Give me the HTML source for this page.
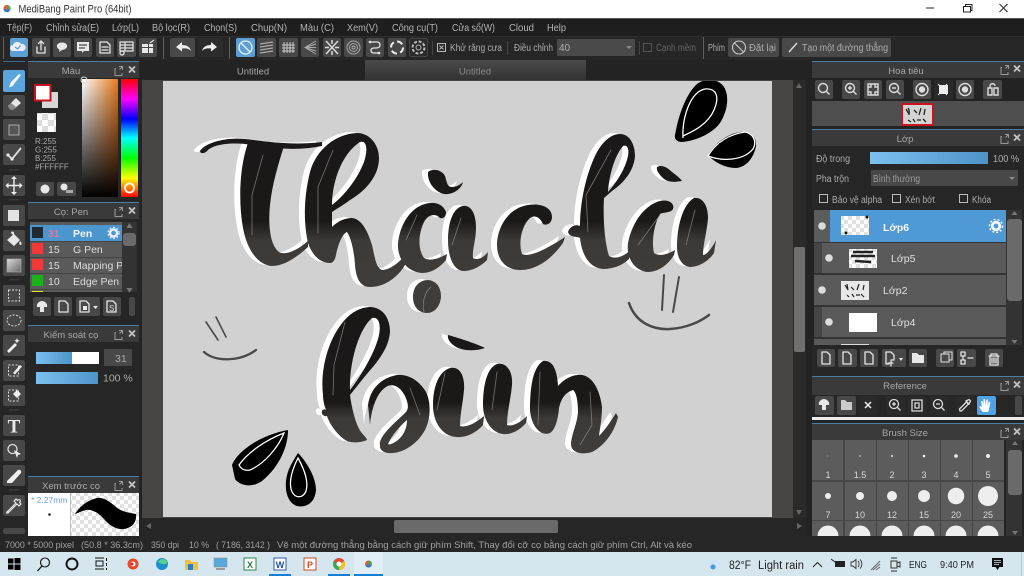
<!DOCTYPE html>
<html><head><meta charset="utf-8"><title>MediBang Paint Pro</title>
<style>
html,body{margin:0;padding:0;background:#222;width:1024px;height:576px;overflow:hidden}
svg{display:block}
text{font-family:"Liberation Sans","Noto Sans CJK SC",sans-serif;font-size:10px;fill:#adadad}
.m{font-size:10.5px;fill:#b4b4b4}
.t{font-size:9.5px;fill:#a8a8a8;text-anchor:middle}
.b{fill:#484848}
.i{fill:none;stroke:#e4e4e4;stroke-width:1.3;stroke-linejoin:round;stroke-linecap:round}
.f{fill:#e8e8e8}
.c{fill:none;stroke:#bbb;stroke-width:1}
.h{fill:none;stroke:#8d8b8a;stroke-width:.8;stroke-linecap:round;opacity:.8}
.ln{fill:#d8d8d8;font-size:9px;text-anchor:middle}
.w{fill:#eee}
</style></head><body>
<svg xmlns="http://www.w3.org/2000/svg" width="1024" height="576" viewBox="0 0 1024 576">
<defs>
<linearGradient id="g1" gradientUnits="userSpaceOnUse" x1="0" y1="80" x2="0" y2="300"><stop offset="0" stop-color="#1a1817"/><stop offset=".64" stop-color="#1b1918"/><stop offset=".73" stop-color="#3c3937"/><stop offset="1" stop-color="#413e3c"/></linearGradient>
<linearGradient id="g2" gradientUnits="userSpaceOnUse" x1="0" y1="300" x2="0" y2="460"><stop offset="0" stop-color="#1a1817"/><stop offset=".64" stop-color="#1b1918"/><stop offset=".74" stop-color="#3c3937"/><stop offset="1" stop-color="#413e3c"/></linearGradient>
<linearGradient id="sq" x1="0" y1="0" x2="1" y2="0"><stop offset="0" stop-color="#fff"/><stop offset="1" stop-color="#e8791f"/></linearGradient>
<linearGradient id="sq2" x1="0" y1="0" x2="0" y2="1"><stop offset="0" stop-color="#000" stop-opacity="0"/><stop offset="1" stop-color="#000"/></linearGradient>
<linearGradient id="hue" x1="0" y1="0" x2="0" y2="1"><stop offset="0" stop-color="#f00"/><stop offset=".17" stop-color="#f0f"/><stop offset=".34" stop-color="#00f"/><stop offset=".5" stop-color="#0ff"/><stop offset=".67" stop-color="#0f0"/><stop offset=".84" stop-color="#ff0"/><stop offset="1" stop-color="#f00"/></linearGradient>
<linearGradient id="bl" x1="0" y1="0" x2="1" y2="0"><stop offset="0" stop-color="#7cc0f0"/><stop offset="1" stop-color="#4d94c8"/></linearGradient>
<linearGradient id="tb" x1="0" y1="0" x2="0" y2="1"><stop offset="0" stop-color="#4a4a4a"/><stop offset="1" stop-color="#333"/></linearGradient>
<linearGradient id="gr" x1="0" y1="0" x2="1" y2="1"><stop offset="0" stop-color="#ddd"/><stop offset="1" stop-color="#666"/></linearGradient>
<pattern id="ck" width="12" height="12" patternUnits="userSpaceOnUse"><rect width="12" height="12" fill="#fff"/><rect width="6" height="6" fill="#ddd"/><rect x="6" y="6" width="6" height="6" fill="#ddd"/></pattern>
<pattern id="ck2" width="8" height="8" patternUnits="userSpaceOnUse"><rect width="8" height="8" fill="#fff"/><rect width="4" height="4" fill="#e0e0e0"/><rect x="4" y="4" width="4" height="4" fill="#e0e0e0"/></pattern>
<filter id="ink" filterUnits="userSpaceOnUse" x="150" y="70" width="640" height="460" color-interpolation-filters="sRGB">
<feOffset in="SourceGraphic" dx="-6" dy="-1" result="o"/>
<feFlood flood-color="#fff" result="w"/>
<feComposite in="w" in2="o" operator="in" result="wh"/>
<feMerge><feMergeNode in="wh"/><feMergeNode in="SourceGraphic"/></feMerge>
</filter>
<clipPath id="cv"><rect x="163" y="81" width="609" height="436"/></clipPath>
<clipPath id="gc"><rect x="812" y="440" width="192" height="96"/></clipPath>
<clipPath id="bc"><rect x="30" y="225" width="92" height="67"/></clipPath>
<clipPath id="lc"><rect x="814" y="210" width="192" height="135"/></clipPath>
</defs>

<!-- window -->
<rect width="1024" height="576" fill="#232323"/>
<rect width="1024" height="18" fill="#fff"/>
<rect y="18" width="1024" height="1" fill="#555"/>
<circle cx="7" cy="8.500" r="3.600" fill="#e05a3a"/><path d="M7 5a3.600 3.600 0 0 1 3 5.500L7 8.500z" fill="#3fb05a"/><path d="M3.600 10a3.600 3.600 0 0 0 6.400.5L7 8.500z" fill="#3a78c8"/>
<text x="18.500" y="12.500" textLength="113" lengthAdjust="spacingAndGlyphs" style="font-size:11px;fill:#333">MediBang Paint Pro (64bit)</text>
<path d="M926 8h8" stroke="#222" stroke-width="1" fill="none"/>
<path d="M963.500 6.500h7v5.500h-7zM965.500 6.500v-2h6.500v6h-1.500" stroke="#222" stroke-width="1" fill="none"/>
<path d="M999.500 4l8 8M1007.500 4l-8 8" stroke="#222" stroke-width="1" fill="none"/>

<!-- menu -->
<rect y="19" width="1024" height="17" fill="#1e1e1e"/>
<g>
<text class="m" x="7" y="31" textLength="25" lengthAdjust="spacingAndGlyphs">Tệp(F)</text>
<text class="m" x="46" y="31" textLength="53" lengthAdjust="spacingAndGlyphs">Chỉnh sửa(E)</text>
<text class="m" x="112" y="31" textLength="27" lengthAdjust="spacingAndGlyphs">Lớp(L)</text>
<text class="m" x="152" y="31" textLength="38" lengthAdjust="spacingAndGlyphs">Bộ lọc(R)</text>
<text class="m" x="204" y="31" textLength="33" lengthAdjust="spacingAndGlyphs">Chọn(S)</text>
<text class="m" x="251" y="31" textLength="36" lengthAdjust="spacingAndGlyphs">Chụp(N)</text>
<text class="m" x="300" y="31" textLength="34" lengthAdjust="spacingAndGlyphs">Màu (C)</text>
<text class="m" x="347" y="31" textLength="31" lengthAdjust="spacingAndGlyphs">Xem(V)</text>
<text class="m" x="392" y="31" textLength="46" lengthAdjust="spacingAndGlyphs">Công cụ(T)</text>
<text class="m" x="452" y="31" textLength="43" lengthAdjust="spacingAndGlyphs">Cửa sổ(W)</text>
<text class="m" x="509" y="31" textLength="25" lengthAdjust="spacingAndGlyphs">Cloud</text>
<text class="m" x="547" y="31" textLength="19" lengthAdjust="spacingAndGlyphs">Help</text>
</g>

<!-- toolbar -->
<rect y="36" width="1024" height="24" fill="#262626"/>
<rect y="36" width="1024" height="1" fill="#2e2e2e"/>
<g fill="#3a6a8c"><rect x="3" y="37" width="1" height="22"/><rect x="163" y="37" width="1" height="22"/><rect x="229" y="37" width="1" height="22"/><rect x="703" y="37" width="1" height="22"/></g>
<rect x="10" y="38" width="18" height="19" rx="2" fill="#5c9fd4"/>
<g class="b"><rect x="32" y="38" width="18" height="19" rx="2"/><rect x="53" y="38" width="18" height="19" rx="2"/><rect x="74" y="38" width="18" height="19" rx="2"/><rect x="96" y="38" width="18" height="19" rx="2"/><rect x="117" y="38" width="19" height="19" rx="2"/><rect x="139" y="38" width="18" height="19" rx="2"/><rect x="170" y="38" width="25" height="19" rx="2"/><rect x="198" y="38" width="25" height="19" rx="2" fill="#2c2c2c"/></g>
<rect x="236" y="38" width="19" height="19" rx="2" fill="#5c9fd4"/>
<g class="b"><rect x="257" y="38" width="19" height="19" rx="2"/><rect x="279" y="38" width="19" height="19" rx="2"/><rect x="301" y="38" width="18" height="19" rx="2"/><rect x="323" y="38" width="18" height="19" rx="2"/><rect x="344" y="38" width="19" height="19" rx="2"/><rect x="366" y="38" width="18" height="19" rx="2"/><rect x="388" y="38" width="18" height="19" rx="2"/></g>
<rect x="409.500" y="38.500" width="18" height="18" rx="2" fill="#2a2a2a" stroke="#444"/>
<!-- toolbar icons -->
<path d="M13 51a3 3 0 0 1 0-6 4.500 4.500 0 0 1 8-1 3.500 3.500 0 0 1 2 7z" fill="#eef"/><path d="M15 47l2.500 2 3-3.500" stroke="#5c9fd4" stroke-width="1.300" fill="none"/>
<path class="i" d="M37 47v6h8v-6M41 50v-9M38.500 43.500l2.500-2.500 2.500 2.500"/>
<path class="f" d="M57 43a5.500 4.200 0 0 1 10 0 5.500 4.200 0 0 1-5 5l-3 2 .5-2.400a4.500 4 0 0 1-2.500-4.600z" transform="translate(0 2)"/>
<path class="f" d="M77 42h12v9h-5l-2 2v-2h-5z"/><path d="M79 45h8M79 48h6" stroke="#484848" stroke-width="1.200"/>
<path class="i" d="M100 42h7l3 3v8h-10zM102 47h6M102 50h6"/>
<path class="i" d="M120 42h13v9h-13zM120 45h13M120 48h13M125 42v9"/><circle cx="122" cy="53" r="2" class="i"/>
<path class="f" d="M142 44h6v3h-6zM149 44h4v3h-4zM142 48h6v5h-6zM149 48h4v5h-4z"/><path d="M150 43l4-3" stroke="#ddd" stroke-width="1.300"/>
<path d="M176 47l6-5v3c5 0 8 2 9 6-2-2.500-5-3-9-2.500v3z" fill="#eee"/>
<path d="M217 47l-6-5v3c-5 0-8 2-9 6 2-2.500 5-3 9-2.500v3z" fill="#eee"/>
<circle cx="245.500" cy="47.500" r="6.500" fill="none" stroke="#e8f2fa" stroke-width="1.300"/><path d="M241 43l9 9" stroke="#e8f2fa" stroke-width="1.300"/>
<path d="M260 44l13-2M260 47l13-2M260 50l13-2M260 53l13-2" stroke="#aaa" stroke-width="1.200" fill="none"/>
<path d="M284 42v11M287 42v11M290 42v11M293 42v11M282 45h13M282 48h13M282 51h13" stroke="#ccc" stroke-width="1" fill="none"/>
<path d="M316 41l-11 6.500 11 6.500M316 47.500h-11M316 44l-11 3.500M316 51l-11-3.500" stroke="#aaa" stroke-width="1" fill="none"/>
<path d="M326 41l12 13M338 41l-12 13M332 40v4M332 51v4M325 47.500h4M335 47.500h4" stroke="#ddd" stroke-width="1.500" fill="none"/>
<g fill="none" stroke="#aaa"><circle cx="353.500" cy="47.500" r="6.500"/><circle cx="353.500" cy="47.500" r="4"/><circle cx="353.500" cy="47.500" r="1.500"/></g>
<path class="i" d="M370 42h7c2 0 3 1 3 3s-1 3-4 3h-2c-2 0-3 1-3 2.500s1 2.500 3 2.500h5"/><circle cx="370" cy="42" r="1.300" class="f"/><circle cx="379" cy="53" r="1.300" class="f"/>
<circle cx="397" cy="47.500" r="6" fill="none" stroke="#eee" stroke-width="2" stroke-dasharray="6 3.400"/>
<circle cx="418.500" cy="47.500" r="6" fill="none" stroke="#bbb" stroke-width="2" stroke-dasharray="3 1.700"/><circle cx="418.500" cy="47.500" r="2.500" fill="none" stroke="#bbb"/>
<rect x="432" y="41" width="1" height="14" fill="#444"/>
<rect x="437.500" y="43.500" width="8" height="8" fill="none" stroke="#bbb"/><path d="M439.500 45.500l4 4m0-4l-4 4" stroke="#bbb"/>
<text x="450" y="51" textLength="52" lengthAdjust="spacingAndGlyphs">Khử răng cưa</text>
<rect x="507" y="41" width="1" height="14" fill="#444"/>
<text x="514" y="51" textLength="39" lengthAdjust="spacingAndGlyphs">Điều chỉnh</text>
<rect x="557" y="39" width="78" height="17" rx="1" fill="#4a4a4a"/><text x="559" y="51" fill="#aaa">40</text><path d="M626 46h6l-3 3z" fill="#888"/>
<rect x="639" y="41" width="1" height="14" fill="#444"/>
<rect x="643.500" y="43.500" width="8" height="8" fill="none" stroke="#555"/>
<text x="656" y="51" textLength="40" lengthAdjust="spacingAndGlyphs" style="fill:#666">Cạnh mềm</text>
<text x="708" y="51" textLength="17" lengthAdjust="spacingAndGlyphs">Phím</text>
<rect x="728" y="38" width="51" height="19" rx="2" class="b"/><circle cx="739" cy="47.500" r="6.500" fill="none" stroke="#ccc" stroke-width="1.100"/><path d="M734.500 43l9 9" stroke="#ccc" stroke-width="1.100"/>
<text x="749" y="51" textLength="27" lengthAdjust="spacingAndGlyphs">Đặt lại</text>
<rect x="782" y="38" width="109" height="19" rx="2" class="b"/><path d="M789 52l8-9" stroke="#ddd" stroke-width="1.400"/>
<text x="802" y="51" textLength="86" lengthAdjust="spacingAndGlyphs">Tạo một đường thẳng</text>

<!-- tabs -->
<rect x="142" y="60" width="223" height="20" fill="#232323"/>
<rect x="365" y="60" width="221" height="20" fill="url(#tb)"/>
<rect x="586" y="60" width="220" height="20" fill="#232323"/>
<text class="t" x="253" y="74.500">Untitled</text><text class="t" x="475" y="74.500" style="fill:#8a8a8a">Untitled</text>

<!-- workspace -->
<rect x="142" y="80" width="651" height="438" fill="#484644"/>
<rect x="163" y="81" width="609" height="436" fill="#d1d1d1"/>

<!-- artwork -->
<g clip-path="url(#cv)">
<title>Thặc là bùn</title>
<g filter="url(#ink)">
<g fill="url(#g1)" stroke="none">
<path d="M200,151C205,143 225,137 245,139C265,141 290,146 322,142L322,146C295,152 265,147 245,144C225,142 212,146 208,150C205,154 200,154 200,151Z"/>
<path d="M248,143C240,165 238,200 243,228C247,250 258,265 272,266C285,266 298,256 308,247L308,241C298,250 285,256 279,252C270,245 268,225 270,205C272,185 278,165 284,146C272,148 258,145 248,143Z"/>
<path fill-rule="evenodd" d="M330,263C320,263 312,255 308,243C304,225 303,200 310,172C316,150 335,134 357,133C370,133 379,145 379,158C379,175 367,190 350,200C345,204 338,208 332,212L332,227C338,221 345,218 352,218C362,219 368,232 372,245C375,258 376,268 382,270C390,270 400,262 407,253L405,265C398,277 385,287 370,287C360,287 356,278 355,265C354,250 351,238 347,232C342,234 338,245 336,255C335,260 333,263 330,263ZM332,205C332,185 340,155 360,142C367,140 368,150 364,162C358,178 345,195 332,205Z"/>
<path d="M428,172C433,168 442,170 445,176C447,182 447,187 452,187C456,187 460,185 463,182C461,190 452,195 444,194C435,192 427,182 428,172Z"/>
<path d="M398,243C400,225 410,208 425,204C435,201 443,204 446,212C446,216 444,219 440,218C436,213 428,214 424,222C419,232 417,248 424,258C430,262 440,258 447,254L446,260C440,267 432,273 422,273C408,272 397,260 398,243Z"/>
<path d="M448,240C448,225 452,208 463,206C472,205 476,215 476,228C476,240 472,250 473,258C478,261 484,257 488,252L487,260C480,267 472,271 463,271C454,270 448,258 448,240Z"/>
<path d="M497,245C497,228 508,208 528,205C542,203 552,208 552,217C552,223 547,226 543,224C540,217 534,214 529,219C522,226 518,242 522,254C530,258 548,248 565,237L563,243C552,258 538,270 520,270C506,270 497,260 497,245Z"/>
<path fill-rule="evenodd" d="M568,232C570,226 576,224 580,226C580,205 585,175 597,152C604,140 612,134 620,134C630,134 635,145 635,156C634,170 625,182 612,191L604,198C603,215 604,240 609,256C616,260 624,256 631,250L629,259C622,266 612,269 603,269C590,268 582,256 580,238C576,236 570,238 568,232ZM608,192C609,175 615,155 623,146C628,144 630,150 627,160C623,173 615,184 608,192Z"/>
<path d="M657,167C662,164 668,168 672,172C676,175 680,178 682,181C676,182 668,183 663,178C660,175 656,171 657,167Z"/>
<path d="M628,243C632,222 645,205 660,201C668,199 675,203 673,209C671,213 664,212 660,214C655,222 651,240 654,253C660,257 668,254 675,250L674,255C668,265 658,272 648,272C636,271 626,260 628,243Z"/>
<path d="M677,247C677,228 682,205 694,198C703,197 708,206 708,218C707,232 703,244 703,255C707,255 712,248 716,240L714,253C708,262 698,267 690,267C682,266 677,258 677,247Z"/>
<path d="M413,297C413,286 420,280 428,280C437,281 441,288 441,297C440,307 434,313 427,313C419,313 413,307 413,297Z" fill="#3f3c3a"/>
</g>
<g fill="url(#g2)">
<path fill-rule="evenodd" d="M323,395C320,370 328,340 343,322C352,311 362,307 371,307C383,308 390,318 390,332C389,345 382,356 372,368C365,376 358,385 350,395C352,410 356,425 361,432C364,436 367,438 367,440C360,443 352,443 347,441C338,436 330,425 327,416C324,417 321,414 322,411C323,409 325,409 326,410C324,405 323,400 323,395ZM350,390C349,365 358,330 372,318C379,316 381,325 379,335C376,350 362,375 350,390Z"/>
<path fill-rule="evenodd" d="M368,405C370,390 380,378 397,375C410,374 420,382 426,392C431,402 431,418 425,430C418,443 405,452 393,453C385,454 379,450 380,445C378,438 392,425 404,414C409,410 409,405 405,396C400,386 392,383 386,387C378,392 372,405 370,425ZM388,444C392,435 400,426 407,420C407,430 402,438 395,442C392,444 389,445 388,444Z"/>
<path d="M433,405C433,388 438,372 450,368C460,366 465,376 464,390C463,402 460,415 460,426C466,428 476,423 484,416L483,425C476,433 466,438 456,437C442,436 433,422 433,405Z"/>
<path d="M448,335C455,337 475,343 485,348C476,351 466,351 458,348C452,345 447,340 448,335Z"/>
<path d="M483,405C483,385 487,368 497,364C507,362 513,372 512,385C511,398 507,412 507,425C513,427 521,422 527,416L526,423C520,430 511,435 503,434C492,433 483,420 483,405Z"/>
<path d="M530,410C530,390 532,368 543,361C552,360 557,368 558,386C565,378 574,374 582,375C594,377 600,392 602,407C602,418 600,428 599,436C605,430 611,421 616,413L618,417C615,430 606,445 592,452C582,455 572,453 571,445C571,435 577,425 578,412C578,400 576,392 573,390C566,392 561,398 559,408C558,420 555,430 550,433C540,437 531,425 530,410Z"/>
</g>
</g>
<!-- seeds -->
<path d="M675,135C678,118 685,95 697,84C705,78 718,78 724,87C730,97 727,112 720,123C712,134 695,141 682,142C677,142 674,139 675,135Z" fill="#000"/>
<path d="M683,138C682,118 690,92 705,89C716,88 720,96 714,110C708,124 694,131 683,136" fill="none" stroke="#fff" stroke-width="1.300"/>
<path d="M708,155C714,144 727,134 740,132C750,131 757,137 756,146C754,157 747,167 736,168C725,168 714,162 708,155Z" fill="#000"/>
<path d="M708,156C716,142 730,134 745,132C754,134 757,142 753,149C744,160 724,162 708,156Z" fill="none" stroke="#fff" stroke-width="1.300"/>
<path d="M232,465C236,454 256,436 288,430C288,446 280,466 262,481C252,488 240,486 235,479Z" fill="#000"/>
<path d="M239,465C248,452 266,440 284,433C278,448 264,464 250,470C245,471 241,469 239,465Z" fill="none" stroke="#fff" stroke-width="1.300"/>
<path d="M298,453C305,460 316,476 316,490C315,503 306,508 297,506C288,503 285,492 286,481C287,470 293,461 298,453Z" fill="#000"/>
<path d="M298,458C293,468 289,480 291,489C294,499 303,499 306,491C309,481 303,467 298,458Z" fill="none" stroke="#fff" stroke-width="1.300"/>
<!-- highlights -->
<path class="h" d="M263,155L252,195L252,235"/><path class="h" d="M333,150L318,187L318,233"/><path class="h" d="M417,215L406,240"/><path class="h" d="M461,218L452,245"/><path class="h" d="M611,150L586,195L588,232"/><path class="h" d="M660,215L638,245"/><path class="h" d="M695,210L686,245"/><path class="h" d="M431,287C424,292 422,305 424,312"/><path class="h" d="M345,322L334,365L333,395"/><path class="h" d="M410,388L420,415"/><path class="h" d="M445,373L437,410"/><path class="h" d="M497,372L492,410"/><path class="h" d="M540,372L538,425"/><path class="h" d="M590,392L592,425L580,445"/>
<!-- marks -->
<g fill="none" stroke="#4b4948" stroke-linecap="round">
<path d="M664,275L662,310M679,277L673,312" stroke-width="2"/>
<path d="M629,303C636,324 655,330 670,329C686,328 700,322 709,315" stroke-width="2.500"/>
<path d="M206,322L218,340M216,317L226,337" stroke-width="1.600"/>
<path d="M204,352C215,362 240,362 256,350" stroke-width="2.300"/>
</g>
</g>

<!-- scrollbars -->
<rect x="793" y="80" width="13" height="438" fill="#2a2a2a"/><rect x="794" y="247" width="11" height="105" rx="2" fill="#6f6f6f"/>
<path d="M799 83l3 5h-6zM799 515l3-5h-6z" fill="#666"/>
<rect x="142" y="518" width="664" height="18" fill="#262626"/><rect x="394" y="520" width="164" height="13" rx="2" fill="#6a6a6a"/>
<path d="M146 526l5-3v6z M802 526l-5-3v6z" fill="#666"/>

<!-- left tools -->
<rect y="60" width="28" height="476" fill="#262626"/>
<rect x="3" y="61" width="22" height="1" fill="#3a6a8c"/>
<rect x="3" y="70" width="22" height="22" rx="2" fill="#5aa5dc"/>
<path d="M9 87c3 0 4-1 5-3l7-9-2-1-8 8c-1 2-1 3-2 5z" fill="#f2f6fa"/>
<g class="b"><rect x="3" y="95" width="22" height="21" rx="2"/><rect x="3" y="119" width="22" height="21" rx="2"/><rect x="3" y="144" width="22" height="21" rx="2"/><rect x="3" y="175" width="22" height="21" rx="2"/><rect x="3" y="205" width="22" height="21" rx="2"/><rect x="3" y="230" width="22" height="21" rx="2"/><rect x="3" y="255" width="22" height="21" rx="2"/><rect x="3" y="285" width="22" height="21" rx="2"/><rect x="3" y="310" width="22" height="21" rx="2"/><rect x="3" y="335" width="22" height="21" rx="2"/><rect x="3" y="360" width="22" height="21" rx="2"/><rect x="3" y="385" width="22" height="21" rx="2"/><rect x="3" y="415" width="22" height="21" rx="2"/><rect x="3" y="440" width="22" height="21" rx="2"/><rect x="3" y="465" width="22" height="21" rx="2"/><rect x="3" y="495" width="22" height="21" rx="2"/><rect x="3" y="528" width="22" height="6" rx="2"/></g>
<g fill="#3a3a3a"><rect x="9" y="169" width="10" height="1.500"/><rect x="9" y="199" width="10" height="1.500"/><rect x="9" y="279" width="10" height="1.500"/><rect x="9" y="409" width="10" height="1.500"/><rect x="9" y="489" width="10" height="1.500"/></g>
<path d="M8 106l8-8 5 5-8 7-3-1z" fill="#e8e8e8"/><path d="M8 106l3 4 2 0 3-3-5-4z" fill="#888"/>
<rect x="9" y="125" width="10" height="10" fill="#555" stroke="#aaa"/>
<path d="M8 155l4 4 9-11" fill="none" stroke="#ddd" stroke-width="1.800"/><circle cx="8" cy="155" r="1.600" class="f"/><circle cx="12" cy="159" r="1.600" class="f"/>
<path d="M14 177v15M6.500 185.500h15" stroke="#eee" stroke-width="1.400"/><path d="M14 176l3 3h-6zM14 195l3-3h-6zM5.500 185.500l3-3v6zM22.500 185.500l-3-3v6z" fill="#eee"/>
<rect x="8" y="210" width="11" height="11" fill="#e4e4e4"/>
<path d="M7 240l7-6 6 6-6 6zM11 233c0-2 3-2 3 0v3" fill="#e8e8e8"/><path d="M20 241c2 2 2 4 .5 4s-1.500-2-.5-4z" fill="#e8e8e8"/>
<rect x="7" y="259" width="14" height="13" fill="url(#gr)" stroke="#aaa" stroke-width=".7"/>
<rect x="8.500" y="290" width="11" height="11" fill="none" stroke="#ddd" stroke-dasharray="2 1.500"/>
<ellipse cx="14" cy="320.500" rx="7" ry="5.500" fill="none" stroke="#ddd" stroke-dasharray="2 1.500"/>
<path d="M7 351l8-8 2 2-8 8zM17 338l.8 2 2 .8-2 .8-.8 2-.8-2-2-.8 2-.8z" fill="#eee"/>
<rect x="8.500" y="365" width="10" height="11" fill="none" stroke="#ddd" stroke-dasharray="2 1.500"/><path d="M13 373l7-8 2 1.500-7 8z" fill="#eee"/>
<rect x="8.500" y="390" width="10" height="11" fill="none" stroke="#ddd" stroke-dasharray="2 1.500"/><path d="M13 394l4-4 4 4-4 4z" fill="#eee"/>
<text x="14" y="432.500" text-anchor="middle" style="font-family:'Liberation Serif',serif;font-size:19px;font-weight:bold;fill:#e8e8e8">T</text>
<circle cx="12.500" cy="449" r="4.500" fill="none" stroke="#ddd" stroke-width="1.300"/><path d="M14 450l7 4-3 1-1 3z" fill="#eee"/>
<path d="M7 481l11-11c2-1 4 1 3 3l-9 10-5 0z" fill="#eee"/>
<path d="M8 512l-1 1 1 0 9-9 2 2 2-2-1.500-1.500c2-2 0-4-2-2l-1.500-1.500-2 2 2 2-9 9z" fill="none" stroke="#eee" stroke-width="1.100"/>

<!-- panel helper bg -->
<rect x="28" y="60" width="112" height="476" fill="#262626"/>
<!-- Color panel -->
<rect x="28" y="61" width="111" height="1" fill="#4a7ea2"/>
<rect x="28" y="62" width="111" height="16" fill="#3a3a3a"/>
<text class="t" x="71" y="74">Màu</text>
<path d="M116 68.500h-1v7h7v-2.500M119 66.500h3.500v3.500M122.500 66.500l-3 3" fill="none" stroke="#999"/><path d="M129 66.500l6 6m0-6l-6 6" stroke="#c4c4c4" stroke-width="1.800"/>
<rect x="42" y="92" width="16" height="16" fill="#d6d6d6"/>
<rect x="35" y="85" width="15.500" height="15.500" fill="#fff" stroke="#c8141e" stroke-width="2"/>
<rect x="37" y="113" width="19" height="19" fill="url(#ck)"/>
<text x="35" y="144" style="font-size:8px;fill:#aaa">R:255</text><text x="35" y="152.500" style="font-size:8px;fill:#aaa">G:255</text><text x="35" y="161" style="font-size:8px;fill:#aaa">B:255</text><text x="35" y="169.500" style="font-size:8px;fill:#aaa">#FFFFFF</text>
<rect x="36" y="182" width="18" height="14" rx="2" class="b"/><rect x="57" y="182" width="19" height="14" rx="2" class="b"/>
<circle cx="45" cy="189" r="4.500" class="f"/><circle cx="64" cy="187" r="3.500" class="f"/><rect x="66" y="190" width="7" height="3" fill="#aaa"/>
<rect x="82" y="79" width="36" height="118" fill="url(#sq)"/><rect x="82" y="79" width="36" height="118" fill="url(#sq2)"/>
<circle cx="84" cy="80" r="3" fill="none" stroke="#ddd"/>
<rect x="121" y="79" width="17" height="118" fill="url(#hue)"/>
<circle cx="129.500" cy="188" r="4.500" fill="none" stroke="#fff" stroke-width="1.800"/>

<!-- Brush panel -->
<rect x="28" y="202" width="111" height="1" fill="#4a7ea2"/>
<rect x="28" y="203" width="111" height="16" fill="#3a3a3a"/>
<text class="t" x="71" y="215">Cọ: Pen</text>
<path d="M116 209.500h-1v7h7v-2.500M119 207.500h3.500v3.500M122.500 207.500l-3 3" fill="none" stroke="#999"/><path d="M129 207.500l6 6m0-6l-6 6" stroke="#c4c4c4" stroke-width="1.800"/>
<rect x="30" y="222" width="92" height="70" fill="#5a5a5a"/>
<g clip-path="url(#bc)">
<rect x="30" y="225" width="92" height="16" fill="#4c96d0"/>
<rect x="32" y="227" width="11" height="11" fill="#1f2a33"/><text x="48" y="237" style="font-size:10.500px;fill:#d8799a;font-weight:bold">31</text><text x="73" y="237" style="font-size:10.500px;fill:#f2f6fa;font-weight:bold">Pen</text>
<circle cx="113.500" cy="233" r="3.500" fill="none" stroke="#eef" stroke-width="2.400"/><circle cx="113.500" cy="233" r="5.500" fill="none" stroke="#eef" stroke-width="1.200" stroke-dasharray="1.800 1.800"/>
<rect x="30" y="241" width="92" height="1" fill="#444"/><rect x="30" y="257" width="92" height="1" fill="#444"/><rect x="30" y="273" width="92" height="1" fill="#444"/><rect x="30" y="289" width="92" height="1" fill="#444"/>
<rect x="32" y="243" width="11" height="11" fill="#f03a3a"/><text x="48" y="253" style="font-size:10.500px;fill:#ddd">15</text><text x="73" y="253" style="font-size:10.500px;fill:#ddd">G Pen</text>
<rect x="32" y="259" width="11" height="11" fill="#f03a3a"/><text x="48" y="269" style="font-size:10.500px;fill:#ddd">15</text><text x="73" y="269" style="font-size:10.500px;fill:#ddd">Mapping Pen</text>
<rect x="32" y="275" width="11" height="11" fill="#1cb01c"/><text x="48" y="285" style="font-size:10.500px;fill:#ddd">10</text><text x="73" y="285" style="font-size:10.500px;fill:#ddd">Edge Pen</text>
<rect x="32" y="291" width="11" height="4" fill="#e6e61c"/>
</g>
<rect x="122" y="222" width="15" height="70" fill="#333"/><rect x="123" y="233" width="13" height="13" rx="3" fill="#6a6a6a"/>
<path d="M129.500 223l3 5h-6zM129.500 293l3-5h-6z" fill="#777"/>
<g class="b"><rect x="33" y="297" width="18" height="19" rx="2"/><rect x="54" y="297" width="18" height="19" rx="2"/><rect x="76" y="297" width="24" height="19" rx="2"/><rect x="103" y="297" width="18" height="19" rx="2"/><rect x="129" y="297" width="6" height="19" rx="2"/></g>
<path d="M37 307c-1-4 3-6 5-6s6 2 5 6h-3v5h-4v-5z" class="f"/>
<path class="i" d="M59 301h6l3 3v8h-9z"/><path class="i" d="M80 301h6l3 3v8h-9z"/><rect x="83" y="306" width="4" height="4" class="f"/><path d="M93 306h5l-2.500 3z" class="f"/>
<path class="i" d="M107 301h6l3 3v8h-9z"/><text x="109" y="311" style="font-size:8px;fill:#ddd">S</text>

<!-- Brush control -->
<rect x="28" y="325" width="111" height="1" fill="#4a7ea2"/>
<rect x="28" y="326" width="111" height="16" fill="#3a3a3a"/>
<text class="t" x="71" y="338">Kiểm soát cọ</text>
<path d="M116 332.500h-1v7h7v-2.500M119 330.500h3.500v3.500M122.500 330.500l-3 3" fill="none" stroke="#999"/><path d="M129 330.500l6 6m0-6l-6 6" stroke="#c4c4c4" stroke-width="1.800"/>
<rect x="36" y="352" width="63" height="12" fill="#fff"/><rect x="36" y="352" width="36" height="12" fill="url(#bl)"/>
<rect x="104" y="349" width="28" height="17" rx="1" class="b"/><text x="115" y="362" style="font-size:10.500px;fill:#aaa">31</text>
<rect x="36" y="372" width="62" height="12" fill="url(#bl)"/>
<text x="103" y="381.500" style="font-size:10.500px;fill:#aaa">100 %</text>

<!-- Preview -->
<rect x="28" y="476" width="111" height="1" fill="#4a7ea2"/>
<rect x="28" y="477" width="111" height="16" fill="#3a3a3a"/>
<text class="t" x="71" y="489">Xem trước cọ</text>
<path d="M116 483.500h-1v7h7v-2.500M119 481.500h3.500v3.500M122.500 481.500l-3 3" fill="none" stroke="#999"/><path d="M129 481.500l6 6m0-6l-6 6" stroke="#c4c4c4" stroke-width="1.800"/>
<rect x="28" y="493" width="43" height="43" fill="#fff"/><rect x="71" y="493" width="68" height="43" fill="url(#ck2)"/><rect x="70" y="493" width="1" height="43" fill="#bbb"/>
<text x="31" y="503" style="font-size:8.500px;fill:#6aa5d8">* 2.27mm</text><circle cx="49.500" cy="514.500" r="1.300" fill="#222"/>
<path d="M75,514C80,506 88,500 97,498C104,497 110,502 116,507C122,512 130,513 136,514C137,522 132,528 124,529C116,530 109,525 104,519C99,513 92,509 86,510C82,511 78,513 75,514Z" fill="#000"/>

<!-- Status -->
<rect y="536" width="1024" height="16" fill="#262626"/>
<g>
<text x="5" y="548" textLength="69" lengthAdjust="spacingAndGlyphs" style="font-size:9.500px;fill:#a0a0a0">7000 * 5000 pixel</text>
<text x="81" y="548" textLength="62" lengthAdjust="spacingAndGlyphs" style="font-size:9.500px;fill:#a0a0a0">(50.8 * 36.3cm)</text>
<text x="151" y="548" textLength="28" lengthAdjust="spacingAndGlyphs" style="font-size:9.500px;fill:#a0a0a0">350 dpi</text>
<text x="189" y="548" textLength="20" lengthAdjust="spacingAndGlyphs" style="font-size:9.500px;fill:#a0a0a0">10 %</text>
<text x="216" y="548" textLength="54" lengthAdjust="spacingAndGlyphs" style="font-size:9.500px;fill:#a0a0a0">( 7186, 3142 )</text>
<text x="277" y="548" textLength="415" lengthAdjust="spacingAndGlyphs" style="font-size:9.500px;fill:#a0a0a0">Vẽ một đường thẳng bằng cách giữ phím Shift, Thay đổi cỡ cọ bằng cách giữ phím Ctrl, Alt và kéo</text>
</g>

<!-- Right panels -->
<rect x="806" y="60" width="218" height="476" fill="#232323"/>
<rect x="812" y="61" width="212" height="1" fill="#4a7ea2"/>
<rect x="812" y="62" width="212" height="16" fill="#3a3a3a"/>
<text class="t" x="906" y="74">Hoa tiêu</text>
<path d="M1002 67.500h-1v7h7v-2.500M1005 65.500h3.500v3.500M1008.500 65.500l-3 3" fill="none" stroke="#999"/><path d="M1014 65.500l6 6m0-6l-6 6" stroke="#c4c4c4" stroke-width="1.800"/>
<g class="b"><rect x="815" y="80" width="18" height="19" rx="2"/><rect x="842" y="80" width="18" height="19" rx="2"/><rect x="864" y="80" width="18" height="19" rx="2"/><rect x="886" y="80" width="18" height="19" rx="2"/><rect x="913" y="80" width="18" height="19" rx="2"/><rect x="934" y="80" width="19" height="19" rx="2" fill="#2a2a2a"/><rect x="956" y="80" width="18" height="19" rx="2"/><rect x="983" y="80" width="19" height="19" rx="2"/></g>
<g fill="none" stroke="#ddd" stroke-width="1.400"><circle cx="823" cy="88" r="4.500"/><path d="M826.500 91.500l3 3"/><circle cx="850" cy="88" r="4.500"/><path d="M853.500 91.500l3 3M848 88h4M850 86v4"/><path d="M868 84h10v11h-10zM871 84v3h-3M875 84v3h3M871 95v-3h-3M875 95v-3h3"/><circle cx="894" cy="88" r="4.500"/><path d="M897.500 91.500l3 3M892 88h4"/><circle cx="922" cy="89.500" r="6"/><circle cx="922" cy="89.500" r="2.500" fill="#ddd"/><circle cx="965" cy="89.500" r="6"/><circle cx="965" cy="89.500" r="2.500" fill="#ddd"/><path d="M988 88h4v7h-4zM994 88h4v7h-4zM990 88v-2c0-3 5-3 5 0"/></g>
<rect x="939" y="85" width="9" height="9" fill="#eee"/><path d="M938 84l2 2m7-2l-2 2m-7 9l2-2m7 2l-2-2" stroke="#eee"/>
<rect x="812" y="101" width="212" height="25" fill="#4e4e4e"/>
<rect x="901" y="103" width="33" height="23" fill="#c8141e"/><rect x="903" y="105" width="29" height="19" fill="#d4d4d4"/>
<path d="M906 109l3 5M908 108c2 2 1 5 1 7M914 110l3 3M921 108l-2 7M925 109l-1 6M908 120l3 2M913 119l2 3M917 120h4M923 119l3 3" stroke="#222" stroke-width="1.300" fill="none"/>

<rect x="812" y="129" width="212" height="1" fill="#4a7ea2"/>
<rect x="812" y="130" width="212" height="16" fill="#3a3a3a"/>
<text class="t" x="905" y="142">Lớp</text>
<path d="M1002 136.500h-1v7h7v-2.500M1005 134.500h3.500v3.500M1008.500 134.500l-3 3" fill="none" stroke="#999"/><path d="M1014 134.500l6 6m0-6l-6 6" stroke="#c4c4c4" stroke-width="1.800"/>
<rect x="812" y="146" width="212" height="64" fill="#262626"/>
<text x="816" y="162" textLength="34" lengthAdjust="spacingAndGlyphs">Độ trong</text>
<rect x="870" y="152" width="118" height="12" fill="url(#bl)"/><text x="993" y="162" textLength="26" lengthAdjust="spacingAndGlyphs">100 %</text>
<text x="816" y="182" textLength="33" lengthAdjust="spacingAndGlyphs">Pha trộn</text>
<rect x="871" y="170" width="147" height="16" rx="1" class="b"/><text x="873" y="182" textLength="47" lengthAdjust="spacingAndGlyphs" style="fill:#9a9a9a">Bình thường</text><path d="M1009 177h6l-3 3z" fill="#888"/>
<rect x="819.500" y="194.500" width="8" height="8" class="c"/><text x="832" y="203" textLength="50" lengthAdjust="spacingAndGlyphs">Bảo vệ alpha</text>
<rect x="892.500" y="194.500" width="8" height="8" class="c"/><text x="905" y="203" textLength="30" lengthAdjust="spacingAndGlyphs">Xén bớt</text>
<rect x="959.500" y="194.500" width="8" height="8" class="c"/><text x="972" y="203" textLength="19" lengthAdjust="spacingAndGlyphs">Khóa</text>

<g clip-path="url(#lc)">
<rect x="814" y="210" width="192" height="135" fill="#333"/>
<rect x="814" y="210" width="16" height="32" fill="#5c5c5c"/><rect x="830" y="210" width="176" height="32" fill="#4f9ad6"/>
<circle cx="822" cy="226" r="3.800" fill="#ddd"/><rect x="841" y="216" width="28" height="19" fill="url(#ck2)"/><circle cx="867" cy="217" r="1.500" fill="#111"/><circle cx="846" cy="233" r="1.500" fill="#111"/>
<text x="883" y="231" style="font-size:10.500px;font-weight:bold;fill:#f4f8fb">Lớp6</text>
<circle cx="996" cy="226" r="3.800" fill="none" stroke="#f4f8fb" stroke-width="2.800"/><circle cx="996" cy="226" r="6.500" fill="none" stroke="#f4f8fb" stroke-width="1.500" stroke-dasharray="2 2"/>
<rect x="814" y="243" width="192" height="30" fill="#5a5a5a"/><rect x="814" y="243" width="8" height="30" fill="#454545"/>
<circle cx="829" cy="258" r="3.800" fill="#ddd"/><rect x="849" y="249" width="28" height="19" fill="url(#ck2)"/><path d="M851 256h24M855 261l16 1M853 252h20" stroke="#222" stroke-width="2.600"/>
<text x="891" y="262" style="font-size:10.500px;fill:#e0e0e0">Lớp5</text>
<rect x="814" y="275" width="192" height="30" fill="#5a5a5a"/>
<circle cx="822" cy="290" r="3.800" fill="#ddd"/><rect x="841" y="281" width="28" height="19" fill="#e8e8e8"/><path d="M845 285l3 5M847 284l1 6M851 287l3 3M859 284l-2 6M864 285l-1 5M847 295l2 2M852 294l2 3M856 295h4M861 294l3 3" stroke="#222" stroke-width="1.200" fill="none"/>
<text x="883" y="294" style="font-size:10.500px;fill:#e0e0e0">Lớp2</text>
<rect x="814" y="307" width="192" height="30" fill="#5a5a5a"/><rect x="814" y="307" width="8" height="30" fill="#454545"/>
<circle cx="829" cy="322" r="3.800" fill="#ddd"/><rect x="849" y="313" width="28" height="19" fill="#fff"/>
<text x="891" y="326" style="font-size:10.500px;fill:#e0e0e0">Lớp4</text>
<rect x="814" y="339" width="192" height="10" fill="#5a5a5a"/><rect x="841" y="344" width="28" height="5" fill="#ddd"/>
</g>
<rect x="1006" y="210" width="16" height="135" fill="#333"/><rect x="1007" y="219" width="15" height="82" rx="3" fill="#6a6a6a"/>
<path d="M1014.500 211l3 4h-6zM1014.500 344l3-4h-6z" fill="#777"/>
<rect x="812" y="345" width="212" height="31" fill="#262626"/>
<g class="b"><rect x="817" y="349" width="18" height="18" rx="2"/><rect x="838" y="349" width="19" height="18" rx="2"/><rect x="860" y="349" width="18" height="18" rx="2"/><rect x="882" y="349" width="24" height="18" rx="2"/><rect x="909" y="349" width="18" height="18" rx="2"/><rect x="936" y="349" width="18" height="18" rx="2"/><rect x="957" y="349" width="19" height="18" rx="2"/><rect x="985" y="349" width="18" height="18" rx="2"/></g>
<g class="i"><path d="M822 352h5l3 3v9h-8z"/><path d="M843 352h5l3 3v9h-8z"/><path d="M865 352h5l3 3v9h-8z"/><path d="M886 352h5l3 3v5h-3M886 352v12h3M891 361v5M888 363h5"/><path d="M941 354h8v8h-8zM944 354v-2h8v8h-3" stroke-width="1"/><path d="M961 352h4v4h-4zM961 360h4v4h-4zM963 356v4M968 358h5"/><path d="M989 356h10M990 356v9h8v-9M992 358v5M994 358v5M996 358v5M991 356v-2h6v2"/></g>
<path d="M912 353h5l2 2h5v8h-12z" class="f"/><path d="M899 358h4l-2 3z" class="f"/>

<!-- Reference -->
<rect x="812" y="376" width="212" height="1" fill="#4a7ea2"/>
<rect x="812" y="377" width="212" height="18" fill="#3a3a3a"/>
<text class="t" x="905" y="389">Reference</text>
<path d="M1002 383.500h-1v7h7v-2.500M1005 381.500h3.500v3.500M1008.500 381.500l-3 3" fill="none" stroke="#999"/><path d="M1014 381.500l6 6m0-6l-6 6" stroke="#c4c4c4" stroke-width="1.800"/>
<rect x="812" y="395" width="212" height="22" fill="#262626"/>
<g class="b"><rect x="815" y="396" width="19" height="19" rx="2"/><rect x="837" y="396" width="19" height="19" rx="2"/><rect x="859" y="396" width="18" height="19" rx="2" fill="#2a2a2a"/><rect x="886" y="396" width="19" height="19" rx="2" fill="#2a2a2a"/><rect x="908" y="396" width="18" height="19" rx="2" fill="#2a2a2a"/><rect x="930" y="396" width="18" height="19" rx="2" fill="#2a2a2a"/><rect x="956" y="396" width="18" height="19" rx="2" fill="#2a2a2a"/><rect x="1015" y="396" width="7" height="19" rx="2"/></g>
<rect x="977" y="396" width="19" height="19" rx="2" fill="#4fa3e4"/>
<path d="M819 405c-1-4 3-6 5-6s6 2 5 6h-3v5h-4v-5z" class="f"/>
<path d="M841 400h4l2 2h5v8h-11z" fill="#ccc"/>
<path d="M865 402l6 6m0-6l-6 6" stroke="#eee" stroke-width="1.500"/>
<g fill="none" stroke="#ddd" stroke-width="1.300"><circle cx="894" cy="404" r="4.500"/><path d="M897.500 407.500l3 3M892 404h4M894 402v4"/><path d="M912 400h10v11h-10zM915 403h4v5h-4z"/><circle cx="938" cy="404" r="4.500"/><path d="M941.500 407.500l3 3M936 404h4"/><path d="M960 411l-.5-2 7-7 2 2-7 7zM966 401l3-1.500 1.500 1.500-1.500 3z"/></g>
<path d="M983 412c-3-3-4-5-3-6l2 1-1-6 1.500 0 1 4 0-6h1.500l.5 6 1-5.500h1.500l-.5 6 1.500-4 1.500.5-1.500 7c0 2-1 3-2 3z" fill="#fff"/>
<rect x="812" y="417" width="212" height="3" fill="#eee"/>

<!-- Brush Size -->
<rect x="812" y="423" width="212" height="1" fill="#4a7ea2"/>
<rect x="812" y="424" width="212" height="16" fill="#3a3a3a"/>
<text class="t" x="905" y="436">Brush Size</text>
<path d="M1002 430.500h-1v7h7v-2.500M1005 428.500h3.500v3.500M1008.500 428.500l-3 3" fill="none" stroke="#999"/><path d="M1014 428.500l6 6m0-6l-6 6" stroke="#c4c4c4" stroke-width="1.800"/>
<g clip-path="url(#gc)">
<rect x="812" y="440" width="192" height="96" fill="#474747"/>
<g fill="#5c5c5c">
<rect x="812" y="440" width="31" height="40"/><rect x="845" y="440" width="31" height="40"/><rect x="877" y="440" width="31" height="40"/><rect x="909" y="440" width="31" height="40"/><rect x="941" y="440" width="31" height="40"/><rect x="973" y="440" width="31" height="40"/>
<rect x="812" y="482" width="31" height="38"/><rect x="845" y="482" width="31" height="38"/><rect x="877" y="482" width="31" height="38"/><rect x="909" y="482" width="31" height="38"/><rect x="941" y="482" width="31" height="38"/><rect x="973" y="482" width="31" height="38"/>
<rect x="812" y="521" width="31" height="16"/><rect x="845" y="521" width="31" height="16"/><rect x="877" y="521" width="31" height="16"/><rect x="909" y="521" width="31" height="16"/><rect x="941" y="521" width="31" height="16"/><rect x="973" y="521" width="31" height="16"/>
</g>
<g fill="#eee">
<circle cx="827.500" cy="456" r=".4"/><circle cx="860" cy="456" r=".7"/><circle cx="892" cy="456" r="1"/><circle cx="924" cy="456" r="1.300"/><circle cx="956" cy="456" r="1.800"/><circle cx="988" cy="456" r="2"/>
<circle cx="828" cy="496" r="3"/><circle cx="860" cy="496" r="4"/><circle cx="892" cy="496" r="5"/><circle cx="924" cy="496" r="6"/><circle cx="956" cy="496" r="8.300"/><circle cx="988" cy="496" r="10"/>
<circle cx="828" cy="536" r="10.500"/><circle cx="860" cy="536" r="10.500"/><circle cx="892" cy="536" r="10.500"/><circle cx="924" cy="536" r="10.500"/><circle cx="956" cy="536" r="10.500"/><circle cx="988" cy="536" r="10.500"/>
</g>
<text class="ln" x="828" y="478">1</text><text class="ln" x="860" y="478">1.5</text><text class="ln" x="892" y="478">2</text><text class="ln" x="924" y="478">3</text><text class="ln" x="956" y="478">4</text><text class="ln" x="988" y="478">5</text>
<text class="ln" x="828" y="518">7</text><text class="ln" x="860" y="518">10</text><text class="ln" x="892" y="518">12</text><text class="ln" x="924" y="518">15</text><text class="ln" x="956" y="518">20</text><text class="ln" x="988" y="518">25</text>
</g>
<rect x="1006" y="440" width="16" height="96" fill="#333"/><rect x="1008" y="450" width="14" height="45" rx="3" fill="#6a6a6a"/>
<path d="M1015 441l3 4h-6zM1015 535l3-4h-6z" fill="#777"/>

<!-- Taskbar -->
<rect y="552" width="1024" height="24" fill="#d5e6ef"/>
<rect x="354" y="552" width="29" height="24" fill="#e2eef5"/>
<rect x="8" y="558.500" width="5.500" height="5" fill="#000"/><rect x="14.500" y="558" width="6" height="5.500" fill="#000"/><rect x="8" y="564.500" width="5.500" height="5" fill="#000"/><rect x="14.500" y="564.500" width="6" height="5.500" fill="#000"/>
<circle cx="45" cy="562.500" r="4.500" fill="none" stroke="#111" stroke-width="1.100"/><path d="M42 566l-4.500 5" stroke="#111" stroke-width="1.300"/>
<circle cx="72" cy="564" r="5.500" fill="none" stroke="#111" stroke-width="1.900"/>
<path d="M95 558h9M95 569h9M96 561h7v5h-7zM106.500 558v3M106.500 563v3M106.500 568v2" fill="none" stroke="#111"/>
<circle cx="133" cy="564" r="5.500" fill="#e84a2a"/><circle cx="133" cy="564" r="2.500" fill="#fff"/><circle cx="132" cy="564" r="1.500" fill="#d03030"/>
<circle cx="162" cy="564" r="6" fill="#1c8fd0"/><path d="M158 562c2-4 8-4 9 0 .5 2-2 2.500-4 2-1.500 0-3.500-.5-5-2z" fill="#55d08a"/>
<path d="M185 560h5l2 2h6v8h-13z" fill="#f0c040"/><path d="M188 564h5v6h-5z" fill="#2a80c0"/>
<rect x="214" y="558" width="13" height="9" fill="#58a8dc" stroke="#888" stroke-width=".5"/><rect x="216" y="568" width="9" height="2" fill="#999"/>
<rect x="244" y="558" width="12" height="12" fill="#fff" stroke="#2a8a4a"/><text x="250" y="568" text-anchor="middle" style="font-size:9px;font-weight:bold;fill:#1e7a40">X</text>
<rect x="274" y="558" width="12" height="12" fill="#fff" stroke="#2a5ca8"/><text x="280" y="568" text-anchor="middle" style="font-size:9px;font-weight:bold;fill:#1e4ea0">W</text>
<rect x="304" y="558" width="12" height="12" fill="#fff" stroke="#d04a20"/><text x="310" y="568" text-anchor="middle" style="font-size:9px;font-weight:bold;fill:#d04a20">P</text>
<circle cx="339" cy="564" r="6" fill="#e04a3a"/><path d="M339 564l5.200-3a6 6 0 0 1-5.200 9z" fill="#f0c020"/><path d="M339 564v6a6 6 0 0 1-5.200-9z" fill="#3aa85a"/><circle cx="339" cy="564" r="2.500" fill="#fff"/>
<circle cx="368.500" cy="564" r="3.500" fill="#e05a3a"/><path d="M368.500 560.500a3.500 3.500 0 0 1 3 5.300l-3-1.800z" fill="#3fb05a"/><path d="M365.500 565.800a3.500 3.500 0 0 0 6 0l-3-1.800z" fill="#3a78c8"/>
<rect x="269" y="574" width="22" height="2" fill="#1380d8"/><rect x="328" y="574" width="22" height="2" fill="#1380d8"/><rect x="354" y="574" width="29" height="2" fill="#1380d8"/>
<ellipse cx="713" cy="564" rx="7" ry="4.500" fill="#cfe4f4"/><circle cx="713" cy="567" r="2.500" fill="#4a94d8"/>
<text x="729" y="569" textLength="22" lengthAdjust="spacingAndGlyphs" style="font-size:11.500px;fill:#222">82°F</text>
<text x="758" y="569" textLength="46" lengthAdjust="spacingAndGlyphs" style="font-size:11.500px;fill:#222">Light rain</text>
<path d="M813 567l4.500-4.500 4.500 4.500" fill="none" stroke="#222" stroke-width="1"/>
<rect x="835" y="561" width="10" height="6" fill="#222"/><path d="M831 559l4 3" stroke="#222"/>
<path d="M851 562h2l3-2.500v9l-3-2.500h-2zM858 561c1.500 1.500 1.500 4.500 0 6M860 559.500c2.500 2.500 2.500 6.500 0 9" fill="none" stroke="#333" stroke-width=".9"/>
<path d="M871 570l9-9M873 570l7-6M876 570l4-3" stroke="#666" stroke-width="1" fill="none"/>
<rect x="891" y="561" width="6" height="7" fill="none" stroke="#333"/><path d="M897 563l3-1v5l-3-1M891 558h6M891 571h6" stroke="#333" fill="none"/>
<text x="909" y="568" textLength="18" lengthAdjust="spacingAndGlyphs" style="font-size:10px;fill:#222">ENG</text>
<text x="940" y="568" textLength="34" lengthAdjust="spacingAndGlyphs" style="font-size:10px;fill:#222">9:40 PM</text>
<path d="M992 558h11v9h-3.500l-2 3-2-3H992z" fill="#111"/><path d="M994 560.500h7M994 562.500h7M994 564.500h5" stroke="#d5e6ef" stroke-width=".8"/>
<rect x="1021" y="552" width="1" height="24" fill="#b8c8d0"/>
</svg>
</body></html>
